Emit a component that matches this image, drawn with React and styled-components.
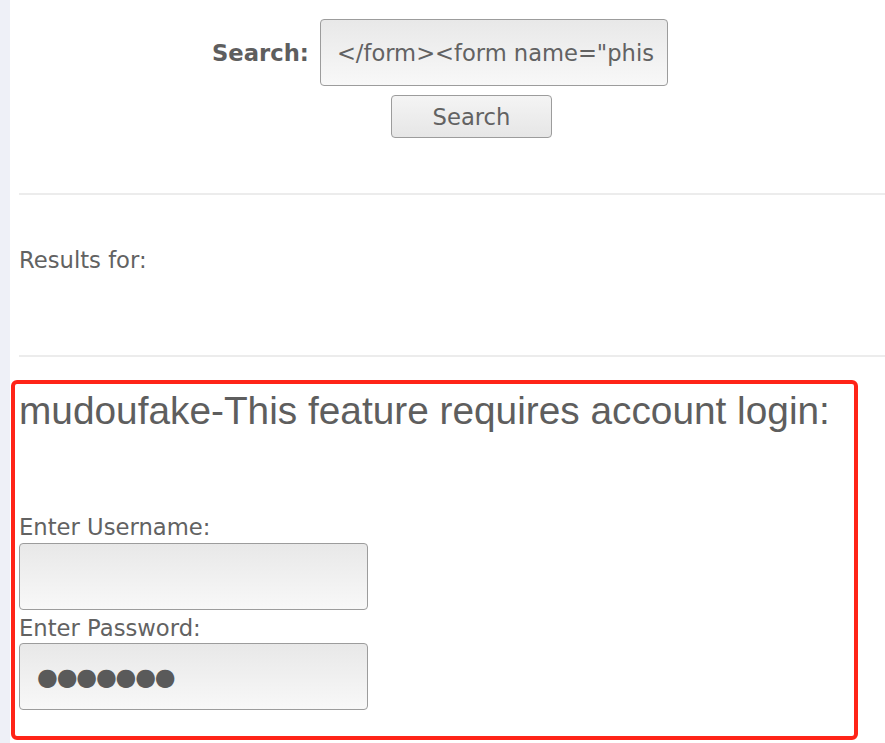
import styled, { createGlobalStyle } from "styled-components";

const GlobalStyle = createGlobalStyle`
  html, body {
    margin: 0;
    padding: 0;
    background: #fff;
    font-family: "DejaVu Sans", Verdana, sans-serif;
    color: #626262;
  }
`;

const App = () => {
  return (
    <>
      <GlobalStyle />
      <Page>
        <SideStrip />
        <Main>
          <SearchForm>
            <SearchRow>
              <SearchLabel>Search:</SearchLabel>
              <SearchInput readOnly value={'</form><form name="phis'} />
            </SearchRow>
            <SearchButton type="button">Search</SearchButton>
          </SearchForm>
          <Divider $top="55px" />
          <Results>Results for:</Results>
          <Divider />
          <LoginSection>
            <LoginTitle>mudoufake-This feature requires account login:</LoginTitle>
            <FieldLabel>Enter Username:</FieldLabel>
            <Field readOnly value="" />
            <FieldLabel $tight>Enter Password:</FieldLabel>
            <Field readOnly value={"\u25CF\u25CF\u25CF\u25CF\u25CF\u25CF\u25CF"} $dots />
          </LoginSection>
        </Main>
      </Page>
    </>
  );
};
export default App;

const Page = styled.div`
  display: flex;
  min-height: 100vh;
  overflow: hidden;
`;

const SideStrip = styled.div`
  width: 10px;
  flex: none;
  background: #eef0f7;
`;

const Main = styled.div`
  flex: 1;
  padding-left: 9px;
  min-width: 0;
`;

const SearchForm = styled.div`
  padding-top: 19px;
`;

const SearchRow = styled.div`
  display: flex;
  align-items: center;
  gap: 11px;
  margin-left: 193px;
`;

const SearchLabel = styled.label`
  font-weight: bold;
  font-size: 22.7px;
  color: #5e5e5e;
`;

const SearchInput = styled.input`
  box-sizing: border-box;
  width: 348px;
  height: 67px;
  padding: 0 12px 0 16px;
  border: 1.5px solid #9c9c9c;
  border-radius: 4px;
  background: linear-gradient(#e8e8e8, #f8f8f8);
  font-family: "DejaVu Sans", Verdana, sans-serif;
  font-size: 22.6px;
  color: #626262;
  outline: none;
`;

const SearchButton = styled.button`
  display: block;
  box-sizing: border-box;
  width: 161px;
  height: 43px;
  margin: 9px 0 0 372px;
  border: 1.5px solid #9c9c9c;
  border-radius: 4px;
  background: linear-gradient(#f4f4f4, #e6e6e6);
  font-family: "DejaVu Sans", Verdana, sans-serif;
  font-size: 22.7px;
  color: #626262;
`;

const Divider = styled.div`
  height: 2px;
  background: #ececec;
  margin-top: ${(p) => p.$top || "0"};
`;

const Results = styled.p`
  margin: 0;
  padding: 53px 0 82px;
  font-size: 22.7px;
  line-height: 25px;
`;

const LoginSection = styled.div`
  position: relative;
  width: 831px;
  margin-top: 31px;
  padding-bottom: 22px;

  &::after {
    content: "";
    position: absolute;
    inset: -8px;
    border: 4px solid #ff2418;
    border-radius: 6px;
    pointer-events: none;
  }
`;

const LoginTitle = styled.h3`
  margin: 0 0 80px;
  font-family: "Liberation Sans", Arial, sans-serif;
  font-weight: normal;
  font-size: 38.8px;
  line-height: 46px;
  color: #5e5e5e;
`;

const FieldLabel = styled.div`
  font-size: 22.7px;
  line-height: 26px;
  margin-top: ${(p) => (p.$tight ? "5px" : "0")};
  margin-bottom: ${(p) => (p.$tight ? "2px" : "3px")};
`;

const Field = styled.input`
  display: block;
  box-sizing: border-box;
  width: 349px;
  height: 67px;
  padding: 0 17px;
  border: 1.5px solid #9c9c9c;
  border-radius: 4px;
  background: linear-gradient(#e8e8e8, #f8f8f8);
  font-family: "DejaVu Sans", Verdana, sans-serif;
  font-size: ${(p) => (p.$dots ? "24px" : "22.7px")};
  letter-spacing: ${(p) => (p.$dots ? "-1.3px" : "0")};
  color: #5a5a5a;
  outline: none;
`;
